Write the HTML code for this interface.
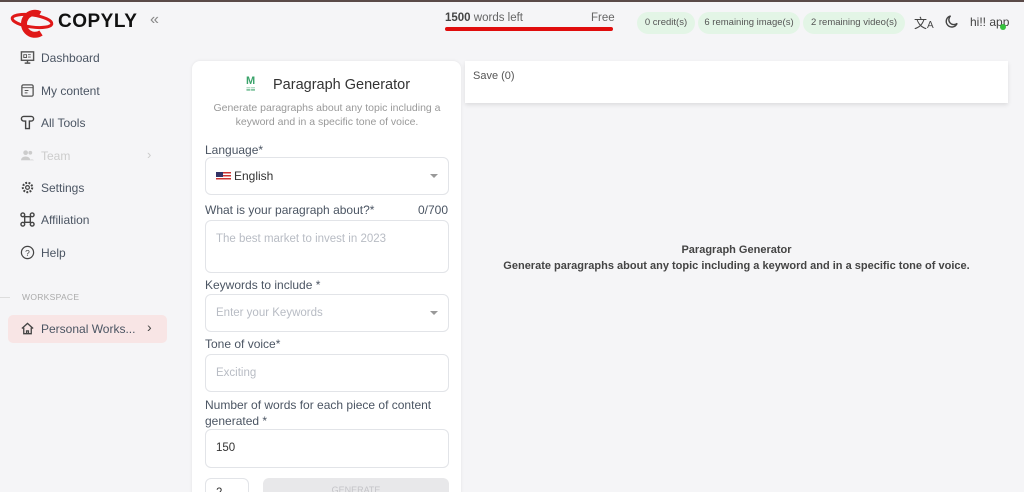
<!DOCTYPE html>
<html><head><meta charset="utf-8"><style>
*{box-sizing:border-box;margin:0;padding:0}
html,body{width:1024px;height:492px;overflow:hidden}
body{background:#f5f5f7;font-family:"Liberation Sans",sans-serif;color:#4b5563;position:relative}
#w{position:absolute;left:0;top:0;width:1024px;height:492px;overflow:hidden}
.a{position:absolute}
.topline{left:0;top:0;width:1024px;height:2px;background:#5a4a48}
.nav{left:20px;font-size:12px;color:#4b5563;display:flex;align-items:center;gap:6px;white-space:nowrap}
.nav svg{width:15px;height:15px}
.pill{top:12px;height:22px;border-radius:11px;background:#e3f5e6;font-size:9.5px;color:#555;line-height:22px;text-align:center;white-space:nowrap}
.card{left:192px;top:61px;width:269px;height:440px;background:#fff;border-radius:8px;box-shadow:0 0 3px rgba(0,0,0,.08)}
.lbl{font-size:12px;color:#4b5563}
.inp{left:205px;width:244px;border:1px solid #e2e4e8;border-radius:6px;background:#fff;font-size:11.5px;color:#b8bcc4;padding-left:10px}
.caret{position:absolute;right:10px;top:50%;margin-top:-2px;border:4px solid transparent;border-top-color:#999;border-bottom:0}
</style></head><body><div id="w">
<div class="a topline"></div>
<svg class="a" style="left:10px;top:8px" width="48" height="30" viewBox="0 0 48 30">
<ellipse cx="22" cy="13" rx="20" ry="6" fill="none" stroke="#e01818" stroke-width="3" transform="rotate(8 22 13)"/>
<path d="M30 6 A11 11 0 1 0 31 25" fill="none" stroke="#e01818" stroke-width="6"/>
</svg>
<div class="a" style="left:58px;top:11px;font-size:19px;font-weight:bold;color:#111;letter-spacing:.5px">COPYLY</div>
<div class="a" style="left:150px;top:11px;font-size:16px;color:#888">«</div>

<div class="a nav" style="top:50px"><svg viewBox="0 0 16 16"><rect x="1.5" y="2" width="13" height="9" fill="none" stroke="#555" stroke-width="1.5"/><path d="M4 5h3v3H4zM8.5 5h3M8.5 7.5h3" stroke="#555" fill="none"/><path d="M5 14h6M8 11v3" stroke="#555" stroke-width="1.5"/></svg>Dashboard</div>
<div class="a nav" style="top:83px"><svg viewBox="0 0 16 16"><rect x="2" y="2" width="12" height="12" rx="1.5" fill="none" stroke="#555" stroke-width="1.4"/><path d="M2 5h12M5 8h4M5 10.5h3" stroke="#555"/></svg>My content</div>
<div class="a nav" style="top:115px"><svg viewBox="0 0 16 16"><path d="M4 1.5h8a2.5 2.5 0 0 1 0 5H10v8H6v-8H4a2.5 2.5 0 0 1 0-5z" fill="none" stroke="#444" stroke-width="1.5"/></svg>All Tools</div>
<div class="a nav" style="top:148px;color:#ccc"><svg viewBox="0 0 16 16"><circle cx="6" cy="5" r="2.5" fill="#ccc"/><circle cx="11" cy="5" r="2" fill="#ccc"/><path d="M1 13a5 4 0 0 1 10 0zM10 13a4 3 0 0 1 5 0z" fill="#ccc"/></svg>Team</div>
<div class="a" style="left:147px;top:147px;color:#ccc;font-size:13px">›</div>
<div class="a nav" style="top:180px"><svg viewBox="0 0 16 16"><circle cx="8" cy="8" r="5" fill="none" stroke="#444" stroke-width="2.2" stroke-dasharray="2 1.5"/><circle cx="8" cy="8" r="2" fill="none" stroke="#444" stroke-width="1.3"/></svg>Settings</div>
<div class="a nav" style="top:212px"><svg viewBox="0 0 16 16"><circle cx="3" cy="3" r="2" fill="none" stroke="#444" stroke-width="1.5"/><circle cx="13" cy="3" r="2" fill="none" stroke="#444" stroke-width="1.5"/><circle cx="3" cy="13" r="2" fill="none" stroke="#444" stroke-width="1.5"/><circle cx="13" cy="13" r="2" fill="none" stroke="#444" stroke-width="1.5"/><rect x="5" y="5" width="6" height="6" fill="none" stroke="#444" stroke-width="1.5"/></svg>Affiliation</div>
<div class="a nav" style="top:245px"><svg viewBox="0 0 16 16"><circle cx="8" cy="8" r="6.5" fill="none" stroke="#444" stroke-width="1.3"/><text x="8" y="11.5" font-size="9" text-anchor="middle" fill="#444" font-family="Liberation Sans">?</text></svg>Help</div>
<div class="a" style="left:0;top:297px;width:10px;height:1px;background:#ddd"></div>
<div class="a" style="left:22px;top:292px;font-size:8.5px;color:#aaa;letter-spacing:.3px">WORKSPACE</div>
<div class="a" style="left:8px;top:315px;width:159px;height:28px;background:#f8e5e5;border-radius:5px"></div>
<div class="a nav" style="top:321px"><svg viewBox="0 0 16 16"><path d="M2 8L8 2.5 14 8M4 7v6.5h8V7M7 13.5v-3h2v3" fill="none" stroke="#444" stroke-width="1.4"/></svg>Personal Works...</div>
<div class="a" style="left:147px;top:319px;font-size:14px;color:#444">›</div>

<div class="a" style="left:445px;top:12px;font-size:11.5px;color:#666"><b style="color:#444;font-weight:600">1500</b> words left</div>
<div class="a" style="left:591px;top:12px;font-size:11.5px;color:#666">Free</div>
<div class="a" style="left:445px;top:27px;width:168px;height:4px;border-radius:2px;background:#e00d0d"></div>
<div class="a pill" style="left:637px;width:58px">0 credit(s)</div>
<div class="a pill" style="left:698px;width:102px">6 remaining image(s)</div>
<div class="a pill" style="left:803px;width:102px">2 remaining video(s)</div>
<div class="a" style="left:914px;top:13px;font-size:13px;color:#444">文<span style="font-size:10px">A</span></div>
<svg class="a" style="left:944px;top:14px" width="15" height="15" viewBox="0 0 16 16"><path d="M7 2a6 6 0 1 0 7 8A5 5 0 0 1 7 2z" fill="none" stroke="#444" stroke-width="1.5"/></svg>
<div class="a" style="left:970px;top:15px;font-size:12px;color:#444;white-space:nowrap">hi!! app</div>
<div class="a" style="left:1000px;top:24px;width:6px;height:6px;border-radius:50%;background:#35c23d"></div>

<div class="a card"></div>
<div class="a" style="left:246px;top:77px;font-size:11px;font-weight:bold;color:#3aa36a;line-height:8px">M<br><span style="font-size:8px">≡≡</span></div>
<div class="a" style="left:273px;top:77px;font-size:14.5px;color:#333">Paragraph Generator</div>
<div class="a" style="left:205px;top:101px;width:244px;text-align:center;font-size:10.5px;line-height:14px;color:#999">Generate paragraphs about any topic including a keyword and in a specific tone of voice.</div>
<div class="a lbl" style="left:205px;top:143px">Language*</div>
<div class="a inp" style="top:157px;height:38px;color:#333;line-height:36px;font-size:12px"><span style="display:inline-block;width:15px;height:9px;background:repeating-linear-gradient(#c33 0 1.5px,#fff 1.5px 3px);position:relative;vertical-align:-1px;margin-right:3px"><span style="position:absolute;left:0;top:0;width:7px;height:5px;background:#336"></span></span>English<span class="caret"></span></div>
<div class="a lbl" style="left:205px;top:203px">What is your paragraph about?*</div>
<div class="a lbl" style="left:418px;top:203px">0/700</div>
<div class="a inp" style="top:220px;height:53px;padding-top:12px">The best market to invest in 2023</div>
<div class="a lbl" style="left:205px;top:278px">Keywords to include *</div>
<div class="a inp" style="top:294px;height:38px;line-height:36px">Enter your Keywords<span class="caret"></span></div>
<div class="a lbl" style="left:205px;top:337px">Tone of voice*</div>
<div class="a inp" style="top:354px;height:38px;line-height:36px">Exciting</div>
<div class="a lbl" style="left:205px;top:397px;line-height:16px;width:244px">Number of words for each piece of content generated *</div>
<div class="a inp" style="top:429px;height:39px;line-height:37px;color:#333">150</div>
<div class="a inp" style="top:478px;width:44px;height:30px;color:#333;line-height:28px">2</div>
<div class="a" style="left:263px;top:478px;width:186px;height:30px;border-radius:6px;background:#e8e8ea;color:#c4c4c8;font-size:9px;text-align:center;line-height:24px">GENERATE</div>

<div class="a" style="left:465px;top:61px;width:543px;height:42px;background:#fff;box-shadow:0 2px 4px rgba(0,0,0,.1)"></div>
<div class="a" style="left:473px;top:70px;font-size:11px;color:#555">Save (0)</div>
<div class="a" style="left:465px;top:242px;width:543px;text-align:center;font-size:11px;font-weight:bold;color:#444;line-height:16px">Paragraph Generator<br>Generate paragraphs about any topic including a keyword and in a specific tone of voice.</div>
</div></body></html>
